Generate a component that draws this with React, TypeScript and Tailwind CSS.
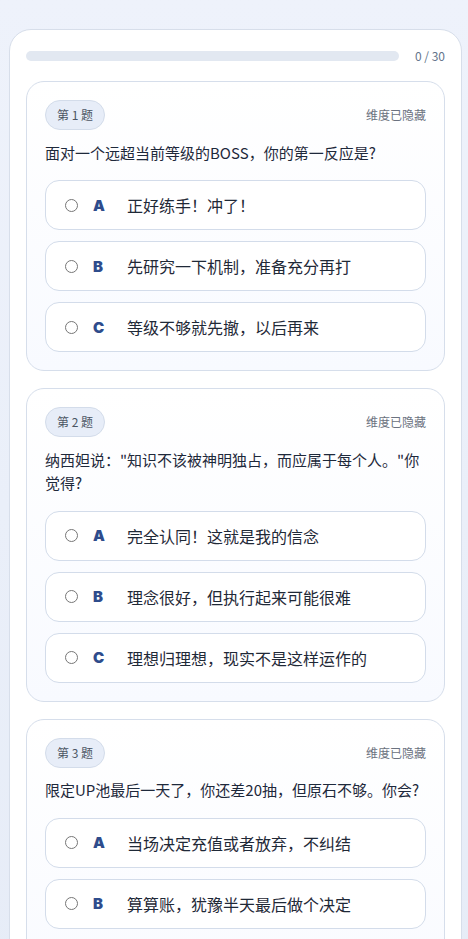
import React from 'react';

interface Question {
  id: number;
  text: string;
  options: { key: string; label: string }[];
}

const questions: Question[] = [
  {
    id: 1,
    text: '面对一个远超当前等级的BOSS，你的第一反应是?',
    options: [
      { key: 'A', label: '正好练手！冲了！' },
      { key: 'B', label: '先研究一下机制，准备充分再打' },
      { key: 'C', label: '等级不够就先撤，以后再来' },
    ],
  },
  {
    id: 2,
    text: '纳西妲说："知识不该被神明独占，而应属于每个人。"你觉得?',
    options: [
      { key: 'A', label: '完全认同！这就是我的信念' },
      { key: 'B', label: '理念很好，但执行起来可能很难' },
      { key: 'C', label: '理想归理想，现实不是这样运作的' },
    ],
  },
  {
    id: 3,
    text: '限定UP池最后一天了，你还差20抽，但原石不够。你会?',
    options: [
      { key: 'A', label: '当场决定充值或者放弃，不纠结' },
      { key: 'B', label: '算算账，犹豫半天最后做个决定' },
      { key: 'C', label: '随缘吧，歪了也是缘分' },
    ],
  },
];

const QuestionCard: React.FC<{ q: Question }> = ({ q }) => (
  <div className="rounded-[18px] border border-[#d6deeb] bg-gradient-to-b from-white to-[#f8faff] px-[18px] pt-[18px] pb-[18px]">
    {/* Header */}
    <div className="flex items-center justify-between">
      <span className="flex h-[30px] items-center rounded-full border border-[#d3dcea] bg-[#e7edf8] px-[11px] text-[12px] text-[#4b5563]">
        第 {q.id} 题
      </span>
      <span className="text-[12px] text-[#6b7280]">维度已隐藏</span>
    </div>

    <p className="mt-[10.5px] text-[15px] leading-[23.5px] text-[#1e293b]">{q.text}</p>

    {/* Options */}
    <div className="mt-[16px] flex flex-col gap-[11px]">
      {q.options.map((o) => (
        <label
          key={o.key}
          className="flex h-[50px] cursor-pointer items-center rounded-[14px] border border-[#d3dcea] bg-white pl-[19px]"
        >
          <input type="radio" name={`q${q.id}`} className="m-0 h-[13px] w-[13px]" />
          <span className="ml-[15px] w-[34px] pt-[2px] font-['Inter',sans-serif] text-[15px] font-black text-[#2e4c8c]">
            {o.key}
          </span>
          <span className="text-[16px] text-[#1f2937]">{o.label}</span>
        </label>
      ))}
    </div>
  </div>
);

export default function App() {
  return (
    <div className="min-h-screen bg-gradient-to-b from-[#eef2fb] to-[#e6ecf7] pl-[9px] pr-[6px] pt-[29px] font-['Noto_Sans_CJK_SC','Noto_Sans',sans-serif]">
      <div className="rounded-[22px] border border-[#d7deea] bg-white px-[16px] pt-[16px] pb-[18px]">
        {/* Progress */}
        <div className="flex h-[20px] items-center gap-[16px]">
          <div className="h-[10px] flex-1 rounded-full bg-[#e2e8f1]" />
          <span className="text-[12px] text-[#64748b]">0 / 30</span>
        </div>

        <div className="mt-[15px] flex flex-col gap-[17px]">
          {questions.map((q) => (
            <QuestionCard key={q.id} q={q} />
          ))}
        </div>
      </div>
    </div>
  );
}
